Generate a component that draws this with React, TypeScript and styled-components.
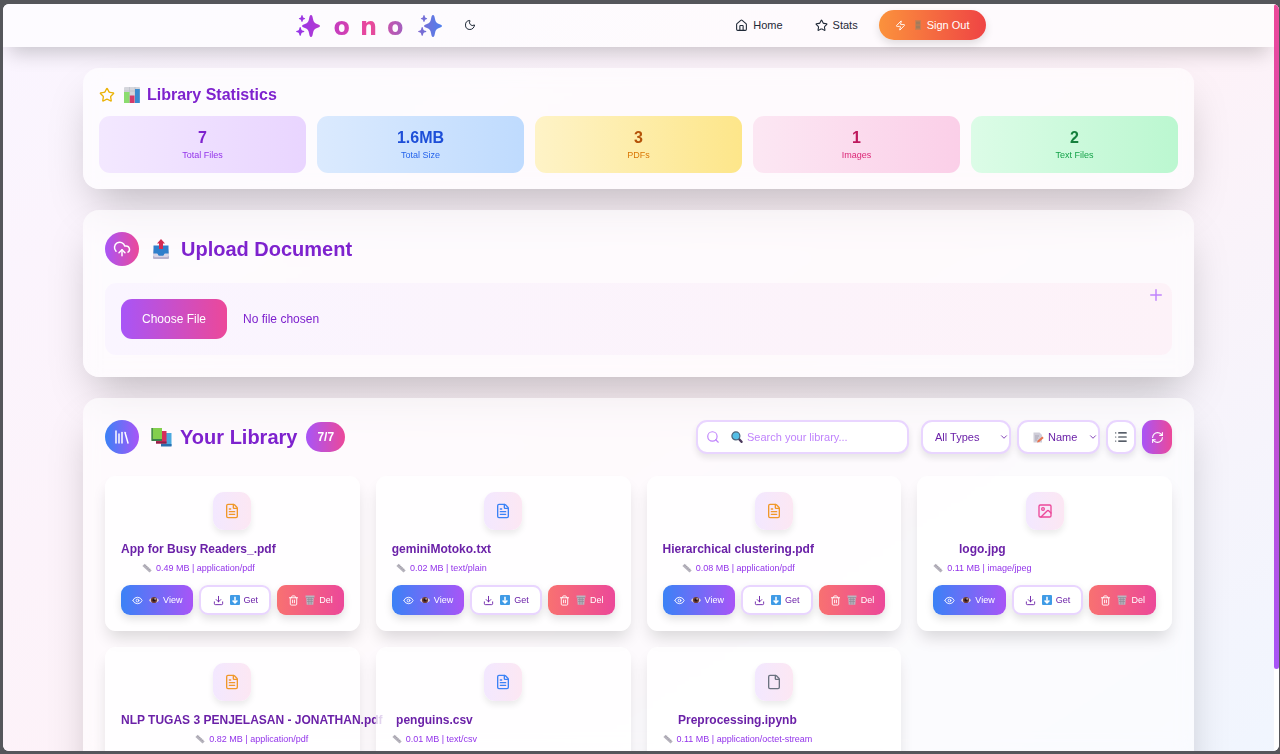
import React from "react";
import styled, { createGlobalStyle, css } from "styled-components";
import {
  ChevronDown,
  CloudUpload,
  Download,
  Eye,
  File,
  FileText,
  House,
  Image,
  Library,
  List,
  Moon,
  Plus,
  RefreshCw,
  Search,
  Star,
  Trash2,
  Zap,
} from "lucide-react";

const GlobalStyle = createGlobalStyle`
  *, *::before, *::after { box-sizing: border-box; }
  html, body, #root { height: 100%; }
  body {
    margin: 0;
    background: #55565b;
    font-family: "Liberation Sans", Arial, sans-serif;
    font-size: 11px;
    line-height: 16px;
  }
  h1, h2, h3, p, dl, dd { margin: 0; }
  button, input, select { font: inherit; }
  svg { flex: none; }
`;

const primary = "linear-gradient(to right, #a855f7, #ec4899)";
const cool = "linear-gradient(to right, #3b82f6, #a855f7)";

const Frame = styled.div`
  height: 100vh;
  padding: 4px 1px 3px 3px;
`;

const Shell = styled.div`
  display: flex;
  height: 100%;
  overflow: hidden;
  border-radius: 6px;
  background: #fff;
`;

const Page = styled.div`
  flex: 1;
  min-width: 0;
  overflow-y: auto;
  scrollbar-width: none;
`;

const Canvas = styled.div`
  background: linear-gradient(to bottom right, #faf5ff, #fdf2f8, #eff6ff);
`;

const ScrollTrack = styled.div`
  width: 5px;
  background: #fff;
`;

const ScrollThumb = styled.div`
  height: 89%;
  border-radius: 5px;
  background: linear-gradient(to bottom, #ec4899, #a855f7);
`;

const Header = styled.header`
  padding: 6px 16px 7px;
  background: rgba(255, 255, 255, 0.6);
  box-shadow: 0 12px 20px -6px rgba(0, 0, 0, 0.2);
`;

const HeaderInner = styled.div`
  display: flex;
  align-items: center;
  justify-content: space-between;
  max-width: 694px;
  margin: 0 auto;
`;

const Brand = styled.div`
  display: flex;
  align-items: center;
  gap: 14px;
  padding-left: 4px;
`;

const Wordmark = styled.h1`
  margin-right: -10px;
  padding-top: 4px;
  font-family: "DejaVu Sans", sans-serif;
  font-size: 24px;
  font-weight: 700;
  line-height: 26px;
  letter-spacing: 10px;
  color: transparent;
  background: linear-gradient(to right, #c43cc0, #ec4899 45%, #8b68cc);
  background-clip: text;
`;

const IconButton = styled.button`
  display: flex;
  padding: 8px;
  border: 0;
  background: none;
  color: #1f2937;
`;

const Nav = styled.nav`
  display: flex;
  align-items: center;
  gap: 10px;
`;

const NavLink = styled.a`
  display: flex;
  align-items: center;
  gap: 5px;
  padding: 0 11px;
  color: #1f2937;
  text-decoration: none;
`;

const SignOut = styled.button`
  display: flex;
  align-items: center;
  gap: 7px;
  height: 30px;
  padding: 0 16px;
  border: 0;
  border-radius: 15px;
  color: #fff;
  background: linear-gradient(to right, #fb923c, #ef4444);
  box-shadow: 0 4px 8px rgba(0, 0, 0, 0.12);
`;

const Main = styled.main`
  display: flex;
  flex-direction: column;
  gap: 21px;
  padding: 21px 80px;
`;

const Panel = styled.section<{ $pad: number }>`
  padding: ${(p) => p.$pad}px;
  border-radius: 16px;
  background: rgba(255, 255, 255, 0.6);
  box-shadow: 0 22px 44px -11px rgba(0, 0, 0, 0.25);
  backdrop-filter: blur(8px);
`;

const Heading = styled.h2<{ $size: number; $gap: number }>`
  display: flex;
  align-items: center;
  gap: ${(p) => p.$gap}px;
  color: #7e22ce;
  font-size: ${(p) => p.$size}px;
  line-height: 22px;
  font-weight: 700;
`;

const HeadingRow = styled.div<{ $gap: number; $below: number }>`
  display: flex;
  align-items: center;
  gap: ${(p) => p.$gap}px;
  margin-bottom: ${(p) => p.$below}px;
`;

const StatGrid = styled.dl`
  display: grid;
  grid-template-columns: repeat(5, 1fr);
  gap: 11px;
`;

const StatTile = styled.div<{ $from: string; $to: string }>`
  display: flex;
  flex-direction: column-reverse;
  padding: 12px 11px 11px;
  border-radius: 11px;
  text-align: center;
  background: linear-gradient(to right, ${(p) => p.$from}, ${(p) => p.$to});
`;

const StatValue = styled.dd<{ $color: string }>`
  color: ${(p) => p.$color};
  font-size: 16px;
  font-weight: 700;
  line-height: 20px;
`;

const StatLabel = styled.dt<{ $color: string }>`
  color: ${(p) => p.$color};
  font-size: 9px;
  line-height: 14px;
`;

const Round = styled.span<{ $bg: string }>`
  display: grid;
  place-items: center;
  width: 34px;
  height: 34px;
  border-radius: 50%;
  color: #fff;
  background: ${(p) => p.$bg};
`;

const DropZone = styled.div`
  position: relative;
  padding: 16px;
  border-radius: 11px;
  background: linear-gradient(to right, #faf5ff, #fdf2f8);
  color: #c084fc;

  > svg {
    position: absolute;
    top: 3px;
    right: 7px;
  }
`;

const FileInput = styled.input`
  display: block;
  width: 100%;
  color: #7e22ce;
  font-size: 12px;

  &::file-selector-button {
    height: 40px;
    margin-right: 16px;
    padding: 0 21px;
    border: 0;
    border-radius: 11px;
    color: #fff;
    font: inherit;
    background: ${primary};
  }
`;

const LibraryBar = styled.div`
  display: flex;
  align-items: center;
  justify-content: space-between;
  margin-bottom: 22px;
`;

const Title = styled.div`
  display: flex;
  align-items: center;
  gap: 12px;
`;

const CountedTitle = styled.div`
  display: flex;
  align-items: center;
  gap: 9px;
`;

const Count = styled.span`
  padding: 6px 11px;
  border-radius: 15px;
  color: #fff;
  font-size: 12px;
  font-weight: 700;
  line-height: 18px;
  background: ${primary};
`;

const Tools = styled.div`
  display: flex;
  align-items: center;
  gap: 6px;
`;

const boxed = css`
  height: 34px;
  border: 2px solid #e9d5ff;
  border-radius: 11px;
  background: #fff;
  color: #6b21a8;
  box-shadow: 0 4px 6px rgba(0, 0, 0, 0.09);
`;

const SearchBox = styled.label`
  ${boxed}
  display: flex;
  align-items: center;
  width: 213px;
  margin-right: 6px;
  padding: 0 8px;
  color: #c084fc;

  > svg:first-child { margin-right: 11px; }
`;

const SearchInput = styled.input`
  flex: 1;
  min-width: 0;
  margin-left: 4px;
  padding: 0;
  border: 0;
  outline: 0;
  background: none;
  color: #6b21a8;

  &::placeholder { color: #c084fc; opacity: 1; }
`;

const Picker = styled.div<{ $width: number; $indent: number }>`
  position: relative;
  width: ${(p) => p.$width}px;
  color: #6b21a8;

  select {
    ${boxed}
    display: block;
    width: 100%;
    padding: 0 0 0 ${(p) => p.$indent}px;
    appearance: none;
  }

  > svg {
    position: absolute;
    top: 12px;
    left: 16px;
    pointer-events: none;
  }

  > svg:last-child {
    left: auto;
    right: 2px;
  }
`;

const SquareButton = styled.button<{ $filled?: boolean }>`
  ${boxed}
  display: grid;
  place-items: center;
  width: 30px;
  padding: 0;
  color: #1f2937;
  ${(p) => p.$filled && css`
    border: 0;
    color: #fff;
    background: ${primary};
  `}
`;

const FileGrid = styled.div`
  display: grid;
  grid-template-columns: repeat(4, minmax(0, 1fr));
  gap: 16px;
`;

const Card = styled.article`
  position: relative;
  display: flex;
  flex-direction: column;
  padding: 16px;
  border-radius: 11px;
  background: rgba(255, 255, 255, 0.8);
  box-shadow: 0 10px 16px -3px rgba(0, 0, 0, 0.14);
`;

const Thumb = styled.span<{ $color: string }>`
  display: grid;
  place-items: center;
  align-self: center;
  width: 38px;
  height: 38px;
  margin-bottom: 10px;
  border-radius: 11px;
  color: ${(p) => p.$color};
  background: linear-gradient(to right, #f3e8ff, #fce7f3);
  box-shadow: 0 4px 6px rgba(0, 0, 0, 0.08);
`;

const FileInfo = styled.div`
  align-self: flex-start;
  margin-bottom: 10px;
  text-align: center;
  white-space: nowrap;
`;

const FileName = styled.h3`
  color: #6b21a8;
  font-size: 12px;
  line-height: 18px;
`;

const FileMeta = styled.p`
  display: flex;
  align-items: center;
  justify-content: center;
  gap: 4px;
  margin-top: 3px;
  color: #9333ea;
  font-size: 9px;
  line-height: 14px;
`;

const Actions = styled.div`
  display: flex;
  gap: 6px;
`;

const Action = styled.button<{ $kind: "view" | "get" | "del" }>`
  display: flex;
  flex: 1 1 auto;
  align-items: center;
  justify-content: center;
  height: 30px;
  padding: 0 8px;
  border: 0;
  border-radius: 9px;
  color: #fff;
  font-size: 9px;
  white-space: nowrap;
  background: ${(p) => (p.$kind === "view" ? cool : "linear-gradient(to right, #f87171, #ec4899)")};
  box-shadow: 0 4px 8px rgba(0, 0, 0, 0.12);
  ${(p) => p.$kind === "get" && css`
    border: 2px solid #e9d5ff;
    color: #6b21a8;
    background: #fff;
  `}

  > svg { margin-right: 6px; }
`;

const Caption = styled.span`
  display: flex;
  align-items: center;
  gap: 4px;
`;

const stats = [
  { value: "7", label: "Total Files", from: "#f3e8ff", to: "#e9d5ff", strong: "#7e22ce", soft: "#9333ea" },
  { value: "1.6MB", label: "Total Size", from: "#dbeafe", to: "#bfdbfe", strong: "#1d4ed8", soft: "#2563eb" },
  { value: "3", label: "PDFs", from: "#fef3c7", to: "#fde68a", strong: "#b45309", soft: "#d97706" },
  { value: "1", label: "Images", from: "#fce7f3", to: "#fbcfe8", strong: "#be185d", soft: "#db2777" },
  { value: "2", label: "Text Files", from: "#dcfce7", to: "#bbf7d0", strong: "#15803d", soft: "#16a34a" },
];

const kinds = {
  pdf: { icon: FileText, color: "#f0982a" },
  text: { icon: FileText, color: "#3b82f6" },
  image: { icon: Image, color: "#ec4899" },
  other: { icon: File, color: "#6b7280" },
};

const files: { name: string; meta: string; kind: keyof typeof kinds }[] = [
  { name: "App for Busy Readers_.pdf", meta: "0.49 MB | application/pdf", kind: "pdf" },
  { name: "geminiMotoko.txt", meta: "0.02 MB | text/plain", kind: "text" },
  { name: "Hierarchical clustering.pdf", meta: "0.08 MB | application/pdf", kind: "pdf" },
  { name: "logo.jpg", meta: "0.11 MB | image/jpeg", kind: "image" },
  { name: "NLP TUGAS 3 PENJELASAN - JONATHAN.pdf", meta: "0.82 MB | application/pdf", kind: "pdf" },
  { name: "penguins.csv", meta: "0.01 MB | text/csv", kind: "text" },
  { name: "Preprocessing.ipynb", meta: "0.11 MB | application/octet-stream", kind: "other" },
];

function Sparkles({ id, from, to }: { id: string; from: string; to: string }) {
  return (
    <svg width="24" height="24" viewBox="0 0 24 24" aria-hidden="true">
      <defs>
        <linearGradient id={id} gradientUnits="userSpaceOnUse" x1="0" y1="0" x2="24" y2="0">
          <stop offset="0" stopColor={from} />
          <stop offset="1" stopColor={to} />
        </linearGradient>
      </defs>
      <g fill={`url(#${id})`}>
        <path d="M15 2c1.200 0 1.500 1.500 2 4 .6 3 1.500 4 4 4.900 2 .7 3 1.200 3 2.100s-1 1.400-3 2.100c-2.500.9-3.400 1.900-4 4.900-.5 2.500-.8 4-2 4s-1.500-1.500-2-4c-.6-3-1.500-4-4-4.900-2-.7-3-1.200-3-2.100s1-1.400 3-2.100c2.500-.9 3.400-1.900 4-4.900.5-2.500.8-4 2-4z" />
        <path d="M6 2c.7 0 .8 2 1.200 2.400S9.200 5 9.200 5.600 7.600 6.400 7.200 6.800 6.700 9 6 9s-.8-1.800-1.200-2.200-2-.6-2-1.200 1.600-.8 2-1.200S5.300 2 6 2z" />
        <path d="M4.200 14c.8 0 .9 2.300 1.400 2.900s2.800.8 2.800 1.600-2.300.9-2.800 1.500-.6 3-1.400 3-.9-2.400-1.400-3-2.700-.7-2.700-1.500 2.200-1 2.700-1.600.6-2.900 1.400-2.900z" />
      </g>
    </svg>
  );
}

const ChartGlyph = () => (
  <svg width="16" height="16" viewBox="0 0 16 16" aria-hidden="true">
    <rect width="16" height="16" rx="1" fill="#d5d6dc" />
    <path d="M0 4h16M5.500 0v16M11 0v16" stroke="#b9bcc6" strokeWidth=".6" />
    <rect y="5" width="5.500" height="11" fill="#8bdc6f" />
    <rect x="5.800" y="8.500" width="4.700" height="7.500" fill="#d43a6b" />
    <rect x="11" y="2" width="4.800" height="14" fill="#3a8bd0" />
  </svg>
);

const OutboxGlyph = () => (
  <svg width="18" height="20" viewBox="0 0 18 20" aria-hidden="true">
    <path d="M2.500 7h13l1.500 7v5a1 1 0 0 1-1 1H2a1 1 0 0 1-1-1v-5z" fill="#b9b3cd" />
    <path d="M1.500 6.500h15V15h-4.200l-1 2H6.700l-1-2H1.500z" fill="#2f7fcb" />
    <path d="M1 14.500h4.300l1.200 2.300h5l1.200-2.300H17V17l-2 1H3l-2-1z" fill="#d9d5e6" />
    <path d="M9 0l4 4.500h-2V10H7V4.500H5z" fill="#d32c52" />
  </svg>
);

const BooksGlyph = () => (
  <svg width="21" height="20" viewBox="0 0 21 20" aria-hidden="true">
    <path d="M10 6h10.500v13H10z" fill="#4aa9df" />
    <path d="M10 17h10.500v2.500H10z" fill="#2a6fae" />
    <path d="M5 4h10.500v12.500H5z" fill="#d52f5b" />
    <path d="M5 14.500h10.500v2H5z" fill="#8d1f49" />
    <path d="M.5 1H11v12.500H.5z" fill="#83cf4d" />
    <path d="M.5 12H11v2H.5zM.5 1h1.300v13H.5z" fill="#3b7f4c" />
  </svg>
);

const EyeGlyph = () => (
  <svg width="10" height="10" viewBox="0 0 10 10" aria-hidden="true">
    <path d="M0 5.200C2 1.500 8 1.500 10 5.200 8 8.700 2 8.700 0 5.200z" fill="#ddd0d8" />
    <circle cx="5" cy="5" r="3.100" fill="#6d3b36" />
    <circle cx="5" cy="5" r="1.600" fill="#1f1418" />
    <circle cx="6.100" cy="3.900" r=".7" fill="#fff" />
  </svg>
);

const DownGlyph = () => (
  <svg width="10" height="10" viewBox="0 0 10 10" aria-hidden="true">
    <rect width="10" height="10" rx="1" fill="#3f9be6" />
    <path d="M5 1.800v6M2.600 5.400L5 7.900l2.400-2.500" fill="none" stroke="#fff" strokeWidth="1.500" />
  </svg>
);

const BinGlyph = () => (
  <svg width="10" height="10" viewBox="0 0 10 10" aria-hidden="true">
    <path d="M.5.5h9v2h-.7L8.300 9.800H1.700L1.200 2.500H.5z" fill="#bcb6c0" />
    <path d="M1 2.500h8M2 4.500h6M2 6.500h6M3.400 2.500v7M5 2.500v7M6.600 2.500v7" stroke="#8d8692" strokeWidth=".6" />
  </svg>
);

const RulerGlyph = () => (
  <svg width="10" height="10" viewBox="0 0 10 10" aria-hidden="true">
    <path d="M2.600.7L9.700 7.400 7.500 9.600.4 2.900z" fill="#b5b2bc" />
    <path d="M3.800 1.800l-1 1M5.200 3.100l-1 1M6.600 4.500l-1 1M8 5.800l-1 1" stroke="#86828e" strokeWidth=".6" />
  </svg>
);

const LensGlyph = () => (
  <svg width="12" height="12" viewBox="0 0 12 12" aria-hidden="true">
    <path d="M7.500 7.500l3 3.300" stroke="#4b3a5c" strokeWidth="2.400" strokeLinecap="round" />
    <circle cx="4.900" cy="4.900" r="4" fill="#54bfe6" stroke="#4d6478" strokeWidth="1.200" />
  </svg>
);

const MemoGlyph = () => (
  <svg width="11" height="11" viewBox="0 0 11 11" aria-hidden="true">
    <path d="M.5.500h6l2.500 2.500v7.500H.5z" fill="#cfcdd8" />
    <path d="M2 4h4M2 6h3M2 8h2" stroke="#9c99ab" strokeWidth=".7" />
    <path d="M9.300 4.500l1.400 1.500-4.500 4-2.200.5.700-2z" fill="#e8734f" />
  </svg>
);

const DoorGlyph = () => (
  <svg width="10" height="10" viewBox="0 0 10 10" aria-hidden="true">
    <rect x="2" width="6" height="10" rx=".5" fill="#b98057" opacity=".7" />
    <path d="M3 1.500h4v3H3zM3 5.500h4v3H3z" fill="#8f7c62" opacity=".7" />
  </svg>
);

function FileCard({ name, meta, kind }: (typeof files)[number]) {
  const { icon: Icon, color } = kinds[kind];
  return (
    <Card>
      <Thumb $color={color}>
        <Icon size={16} />
      </Thumb>
      <FileInfo>
        <FileName>{name}</FileName>
        <FileMeta><RulerGlyph />{meta}</FileMeta>
      </FileInfo>
      <Actions>
        <Action type="button" $kind="view"><Eye size={11} /><Caption><EyeGlyph />View</Caption></Action>
        <Action type="button" $kind="get"><Download size={11} /><Caption><DownGlyph />Get</Caption></Action>
        <Action type="button" $kind="del"><Trash2 size={11} /><Caption><BinGlyph />Del</Caption></Action>
      </Actions>
    </Card>
  );
}

export default function App() {
  return (
    <Frame>
      <GlobalStyle />
      <Shell>
        <Page>
          <Canvas>
            <Header>
              <HeaderInner>
                <Brand>
                  <Sparkles id="spark-left" from="#9333ea" to="#b53bd0" />
                  <Wordmark>ono</Wordmark>
                  <Sparkles id="spark-right" from="#8069cf" to="#4f80ee" />
                  <IconButton type="button" aria-label="Toggle dark mode"><Moon size={12} /></IconButton>
                </Brand>
                <Nav>
                  <NavLink href="#home"><House size={13} /> Home</NavLink>
                  <NavLink href="#stats"><Star size={13} /> Stats</NavLink>
                  <SignOut type="button"><Zap size={11} /><Caption><DoorGlyph />Sign Out</Caption></SignOut>
                </Nav>
              </HeaderInner>
            </Header>
            <Main>
              <Panel $pad={16}>
                <HeadingRow $gap={9} $below={10}>
                  <Star size={16} color="#eab308" />
                  <Heading $size={16} $gap={7}><ChartGlyph />Library Statistics</Heading>
                </HeadingRow>
                <StatGrid>
                  {stats.map((s) => (
                    <StatTile key={s.label} $from={s.from} $to={s.to}>
                      <StatLabel $color={s.soft}>{s.label}</StatLabel>
                      <StatValue $color={s.strong}>{s.value}</StatValue>
                    </StatTile>
                  ))}
                </StatGrid>
              </Panel>
              <Panel $pad={22}>
                <HeadingRow $gap={13} $below={17}>
                  <Round $bg={primary}><CloudUpload size={18} /></Round>
                  <Heading $size={20} $gap={11}><OutboxGlyph />Upload Document</Heading>
                </HeadingRow>
                <DropZone>
                  <FileInput type="file" aria-label="Upload document" />
                  <Plus size={18} />
                </DropZone>
              </Panel>
              <Panel $pad={22}>
                <LibraryBar>
                  <Title>
                    <Round $bg={cool}><Library size={18} /></Round>
                    <CountedTitle>
                      <Heading $size={20} $gap={8}><BooksGlyph />Your Library</Heading>
                      <Count>7/7</Count>
                    </CountedTitle>
                  </Title>
                  <Tools>
                    <SearchBox>
                      <Search size={14} />
                      <LensGlyph />
                      <SearchInput type="search" aria-label="Search your library" placeholder="Search your library..." />
                    </SearchBox>
                    <Picker $width={90} $indent={12}>
                      <select aria-label="File type" defaultValue="all">
                        <option value="all">All Types</option>
                      </select>
                      <ChevronDown size={10} />
                    </Picker>
                    <Picker $width={83} $indent={29}>
                      <select aria-label="Sort by" defaultValue="name">
                        <option value="name">Name</option>
                      </select>
                      <MemoGlyph />
                      <ChevronDown size={10} />
                    </Picker>
                    <SquareButton type="button" aria-label="List view"><List size={14} /></SquareButton>
                    <SquareButton type="button" aria-label="Refresh" $filled><RefreshCw size={13} /></SquareButton>
                  </Tools>
                </LibraryBar>
                <FileGrid>
                  {files.map((f) => (
                    <FileCard key={f.name} {...f} />
                  ))}
                </FileGrid>
              </Panel>
            </Main>
          </Canvas>
        </Page>
        <ScrollTrack>
          <ScrollThumb />
        </ScrollTrack>
      </Shell>
    </Frame>
  );
}
